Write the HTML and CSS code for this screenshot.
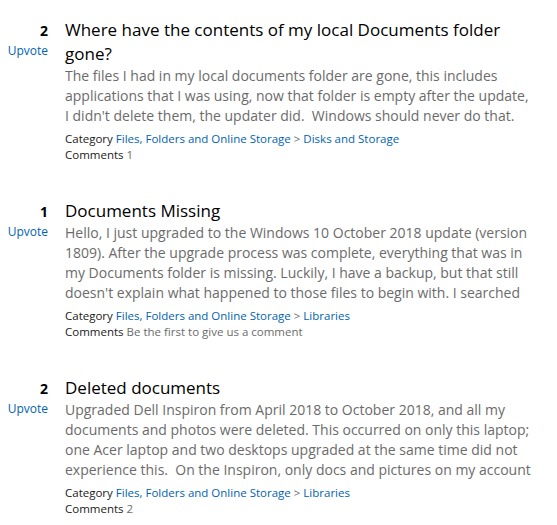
FILE: index.html
```html
<!DOCTYPE html>
<html lang="en">
<head>
<meta charset="utf-8">
<title>Feedback</title>
<link rel="stylesheet" href="styles.css">
</head>
<body>
<ul class="feed">
  <li class="post">
    <div class="vote">
      <div class="count">2</div>
      <a class="upvote" href="#">Upvote</a>
    </div>
    <div class="content">
      <h2 class="title">Where have the contents of my local Documents folder gone?</h2>
      <p class="body">The files I had in my local documents folder are gone, this includes applications that I was using, now that folder is empty after the update, I didn't delete them, the updater did.&nbsp; Windows should never do that.</p>
      <div class="meta"><span class="label">Category</span> <a href="#">Files, Folders and Online Storage</a> <span class="sep">&gt;</span> <a href="#">Disks and Storage</a></div>
      <div class="meta"><span class="label">Comments</span> <span class="muted">1</span></div>
    </div>
  </li>
  <li class="post">
    <div class="vote">
      <div class="count">1</div>
      <a class="upvote" href="#">Upvote</a>
    </div>
    <div class="content">
      <h2 class="title">Documents Missing</h2>
      <p class="body">Hello, I just upgraded to the Windows 10 October 2018 update (version 1809). After the upgrade process was complete, everything that was in my Documents folder is missing. Luckily, I have a backup, but that still doesn't explain what happened to those files to begin with. I searched</p>
      <div class="meta"><span class="label">Category</span> <a href="#">Files, Folders and Online Storage</a> <span class="sep">&gt;</span> <a href="#">Libraries</a></div>
      <div class="meta"><span class="label">Comments</span> <span class="muted">Be the first to give us a comment</span></div>
    </div>
  </li>
  <li class="post">
    <div class="vote">
      <div class="count">2</div>
      <a class="upvote" href="#">Upvote</a>
    </div>
    <div class="content">
      <h2 class="title">Deleted documents</h2>
      <p class="body">Upgraded Dell Inspiron from April 2018 to October 2018, and all my documents and photos were deleted. This occurred on only this laptop; one Acer laptop and two desktops upgraded at the same time did not experience this.&nbsp; On the Inspiron, only docs and pictures on my account</p>
      <div class="meta"><span class="label">Category</span> <a href="#">Files, Folders and Online Storage</a> <span class="sep">&gt;</span> <a href="#">Libraries</a></div>
      <div class="meta"><span class="label">Comments</span> <span class="muted">2</span></div>
    </div>
  </li>
</ul>
</body>
</html>
```

FILE: styles.css
```css
html, body {
  margin: 0;
  padding: 0;
  background: #fff;
}

body {
  font-family: "Open Sans", "Noto Sans", sans-serif;
  color: #000;
  width: 557px;
}

.feed {
  list-style: none;
  margin: 0;
  padding: 18px 24px 0 0;
  display: flex;
  flex-direction: column;
  gap: 36px;
}

.post {
  display: flex;
  align-items: baseline;
  gap: 17px;
}

.vote {
  width: 48px;
  flex: none;
  text-align: right;
}

.count {
  font-size: 14px;
  font-weight: 700;
  line-height: 16px;
  color: #000;
}

.upvote {
  display: block;
  margin-top: 4px;
  font-size: 12px;
  line-height: 16px;
  color: #0063b1;
  text-decoration: none;
}

.content {
  flex: 1;
  min-width: 0;
}

.title {
  margin: 0;
  font-size: 17px;
  font-weight: 400;
  line-height: 24px;
  color: #000;
}

.body {
  margin: 0 0 5px;
  font-size: 14px;
  line-height: 20px;
  color: #6b6b6b;
  max-height: 80px;
  overflow: hidden;
}

.meta {
  font-size: 11.5px;
  line-height: 16px;
  color: #6b6b6b;
}

.meta .label {
  color: #1a1a1a;
}

.meta a {
  color: #0063b1;
  text-decoration: none;
}

.meta .muted {
  color: #6b6b6b;
}
```
